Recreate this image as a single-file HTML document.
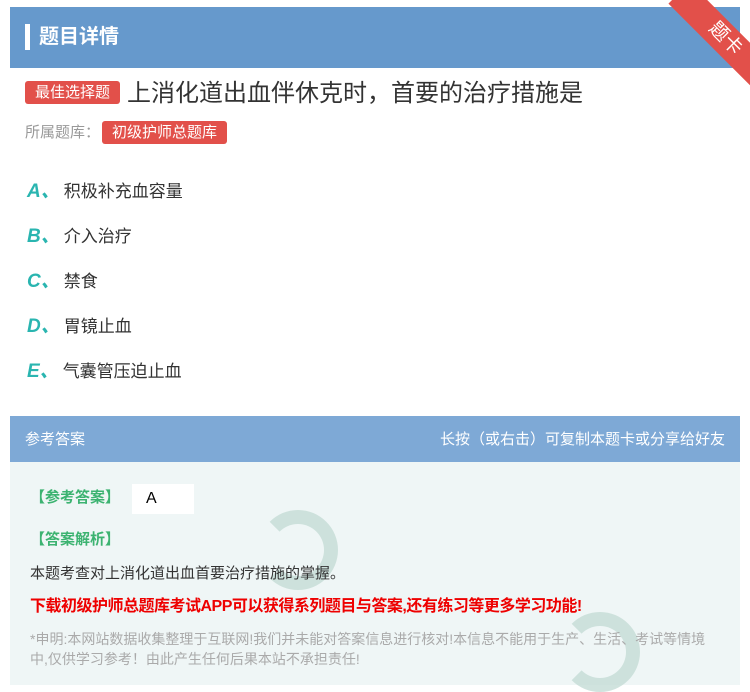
<!DOCTYPE html>
<html><head><meta charset="utf-8"><style>
body{margin:0;width:750px;height:685px;background:#fff;font-family:"Liberation Sans","Noto Sans CJK SC",sans-serif;position:relative;overflow:hidden}
.hd{position:absolute;left:10px;top:7px;width:730px;height:61px;background:#6699cc}
.hd .bar{position:absolute;left:15px;top:17px;width:5px;height:26px;background:#fff}
.hd .t{position:absolute;left:29px;top:13px;color:#fff;font-size:20px;font-weight:bold}
.rib{position:absolute;width:130px;height:30px;background:#e2504a;transform:rotate(45deg);color:#fff;font-size:19px;text-align:center;line-height:30px;left:660px;top:24px}
.tag{display:inline-block;background:#e2504a;color:#fff;border-radius:3px;font-size:15px;padding:0 10px;height:23px;line-height:23px}
.q{position:absolute;left:25px;top:79px;font-size:24px;color:#333;line-height:30px}
.q .tag{vertical-align:4px;margin-right:7px}
.lib{position:absolute;left:25px;top:121px;font-size:15px;color:#999}
.opt{position:absolute;left:27px;font-size:17px;color:#333}
.opt b{color:#2ab5b0;font-style:italic;font-size:19px;margin-right:4px}
.ah{position:absolute;left:10px;top:416px;width:730px;height:46px;background:#7ea9d6;color:#fff;font-size:15px}
.ab{position:absolute;left:10px;top:462px;width:730px;height:223px;background:#eff6f6}
</style></head><body>
<div class="hd"><div class="bar"></div><div class="t">题目详情</div></div>
<div class="rib">题卡</div>
<div class="q"><span class="tag">最佳选择题</span>上消化道出血伴休克时，首要的治疗措施是</div>
<div class="lib">所属题库：<span class="tag" style="margin-left:2px">初级护师总题库</span></div>
<div class="opt" style="top:176px"><b>A、</b>积极补充血容量</div>
<div class="opt" style="top:221px"><b>B、</b>介入治疗</div>
<div class="opt" style="top:266px"><b>C、</b>禁食</div>
<div class="opt" style="top:311px"><b>D、</b>胃镜止血</div>
<div class="opt" style="top:356px"><b>E、</b>气囊管压迫止血</div>
<div class="ah"><span style="position:absolute;left:15px;top:12px">参考答案</span><span style="position:absolute;right:15px;top:12px">长按（或右击）可复制本题卡或分享给好友</span></div>
<div class="ab">
<div style="position:absolute;left:248px;top:48px;width:80px;height:80px;border-radius:50%;border:14px solid #c5ddd6;border-left-color:transparent;opacity:.8;box-sizing:border-box"></div>
<div style="position:absolute;left:550px;top:150px;width:80px;height:80px;border-radius:50%;border:14px solid #c5ddd6;border-left-color:transparent;opacity:.8;box-sizing:border-box"></div>
<div style="position:absolute;left:20px;top:24px;color:#3cb371;font-size:15px;font-weight:bold">【参考答案】</div>
<div style="position:absolute;left:122px;top:22px;width:62px;height:30px;background:#fff;font-size:16px;line-height:30px;padding-left:14px;box-sizing:border-box">A</div>
<div style="position:absolute;left:20px;top:66px;color:#3cb371;font-size:15px;font-weight:bold">【答案解析】</div>
<div style="position:absolute;left:20px;top:100px;color:#333;font-size:15px">本题考查对上消化道出血首要治疗措施的掌握。</div>
<div style="position:absolute;left:20px;top:130px;color:#e00;font-size:16px;font-weight:bold;letter-spacing:-0.5px">下载初级护师总题库考试APP可以获得系列题目与答案,还有练习等更多学习功能!</div>
<div style="position:absolute;left:20px;top:167px;width:680px;color:#aaa;font-size:14px;line-height:20px">*申明:本网站数据收集整理于互联网!我们并未能对答案信息进行核对!本信息不能用于生产、生活、考试等情境中,仅供学习参考！由此产生任何后果本站不承担责任!</div>
</div>
</body></html>
